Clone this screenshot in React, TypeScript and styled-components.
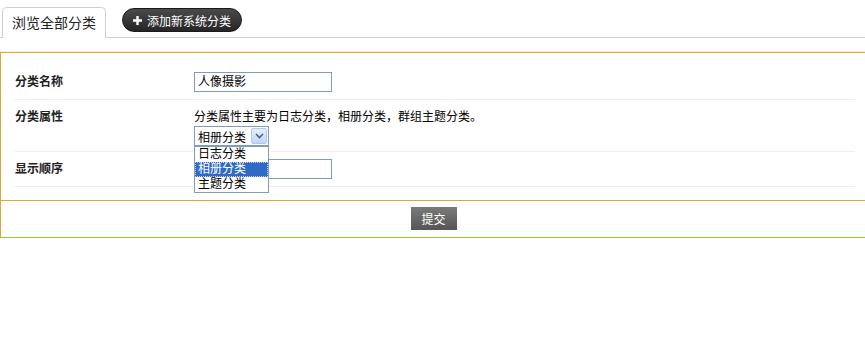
import React from 'react';
import styled, { createGlobalStyle } from 'styled-components';

const GlobalStyle = createGlobalStyle`
  body {
    margin: 0;
    background: #fff;
    font-family: "Liberation Sans", "Noto Sans CJK SC", sans-serif;
    font-size: 12px;
    color: #000;
    overflow: hidden;
  }
`;

const Page = styled.div`
  width: 870px;
`;

const TabBar = styled.div`
  display: flex;
  align-items: flex-start;
  padding: 7px 0 0 2px;
  height: 30px;
  border-bottom: 1px solid #cfcfcf;
`;

const Tab = styled.div`
  box-sizing: border-box;
  height: 31px;
  width: 104px;
  border: 1px solid #cfcfcf;
  border-bottom: none;
  border-radius: 5px 5px 0 0;
  background: #fff;
  font-size: 14px;
  line-height: 30px;
  text-align: center;
  color: #222;
`;

const AddButton = styled.div`
  box-sizing: border-box;
  display: flex;
  align-items: center;
  gap: 4px;
  margin: 1px 0 0 16px;
  height: 24px;
  padding: 0 10px 0 9px;
  border-radius: 12px;
  background: linear-gradient(#4a4a4a, #262626);
  border: 1px solid #1a1a1a;
  color: #fff;
  font-size: 12px;
`;

const Plus = styled.svg`
  width: 11px;
  height: 11px;
`;

const FormBox = styled.div`
  margin-top: 14px;
  border: 1px solid #e2a43c;
  border-right: none;
  box-shadow: 0 -1px 0 #fdf3cf;
`;

const Fields = styled.div`
  padding: 12px 10px 13px 14px;
  width: 840px;
`;

const Row = styled.div<{ $bottom: number }>`
  display: flex;
  padding: 7px 0 ${(p) => p.$bottom}px;
  border-bottom: 1px solid #eceef0;
`;

const Label = styled.div`
  width: 179px;
  font-weight: bold;
  line-height: 20px;
  color: #222;
`;

const Value = styled.div`
  display: flex;
  flex-direction: column;
  align-items: flex-start;
  position: relative;
`;

const TextInput = styled.div`
  box-sizing: border-box;
  width: 138px;
  height: 20px;
  border: 1px solid #7f9db9;
  padding: 0 3px;
  line-height: 18px;
`;

const Hint = styled.div`
  line-height: 16px;
  margin-top: 2px;
`;

const Select = styled.div`
  box-sizing: border-box;
  display: flex;
  align-items: center;
  justify-content: space-between;
  width: 75px;
  height: 20px;
  margin-top: 1px;
  border: 1px solid #7f9db9;
  padding: 1px 1px 1px 3px;
  background: #fff;
`;

const Arrow = styled.div`
  box-sizing: border-box;
  width: 16px;
  height: 16px;
  border: 1px solid #b3c8ef;
  border-radius: 2px;
  background: linear-gradient(#e6eefc, #c4d4f6);
  display: flex;
  align-items: center;
  justify-content: center;
`;

const Options = styled.div`
  position: absolute;
  left: 0;
  top: 39px;
  box-sizing: border-box;
  width: 75px;
  border: 1px solid #7f9db9;
  background: #fff;
  z-index: 2;
`;

const Option = styled.div<{ $active?: boolean }>`
  height: 15px;
  line-height: 13px;
  box-sizing: border-box;
  padding: 0 2px;
  border: 1px dotted ${(p) => (p.$active ? '#c0d0f0' : 'transparent')};
  background: ${(p) => (p.$active ? '#316ac5' : '#fff')};
  color: ${(p) => (p.$active ? '#fff' : '#000')};
`;

const Actions = styled.div`
  display: flex;
  justify-content: center;
  border-top: 1px solid #e2a43c;
  padding: 6px 0 7px;
  width: 865px;
`;

const Submit = styled.button`
  width: 46px;
  height: 23px;
  border: none;
  background: linear-gradient(#7a7a7a, #555);
  color: #fff;
  font-family: "Liberation Sans", "Noto Sans CJK SC", sans-serif;
  font-size: 12px;
  padding: 0;
`;

export default function App() {
  return (
    <Page>
      <GlobalStyle />
      <TabBar>
        <Tab>浏览全部分类</Tab>
        <AddButton>
          <Plus viewBox="0 0 11 11">
            <path d="M5.5 1v9M1 5.5h9" stroke="#fff" strokeWidth="2.4" />
          </Plus>
          添加新系统分类
        </AddButton>
      </TabBar>
      <FormBox>
        <Fields>
          <Row $bottom={7}>
            <Label>分类名称</Label>
            <Value>
              <TextInput>人像摄影</TextInput>
            </Value>
          </Row>
          <Row $bottom={5}>
            <Label>分类属性</Label>
            <Value>
              <Hint>分类属性主要为日志分类，相册分类，群组主题分类。</Hint>
              <Select>
                相册分类
                <Arrow>
                  <svg width="9" height="6" viewBox="0 0 9 6">
                    <path d="M1 1l3.5 3.5L8 1" fill="none" stroke="#4d6185" strokeWidth="1.6" />
                  </svg>
                </Arrow>
              </Select>
              <Options>
                <Option>日志分类</Option>
                <Option $active>相册分类</Option>
                <Option>主题分类</Option>
              </Options>
            </Value>
          </Row>
          <Row $bottom={7}>
            <Label>显示顺序</Label>
            <Value>
              <TextInput />
            </Value>
          </Row>
        </Fields>
        <Actions>
          <Submit>提交</Submit>
        </Actions>
      </FormBox>
    </Page>
  );
}
